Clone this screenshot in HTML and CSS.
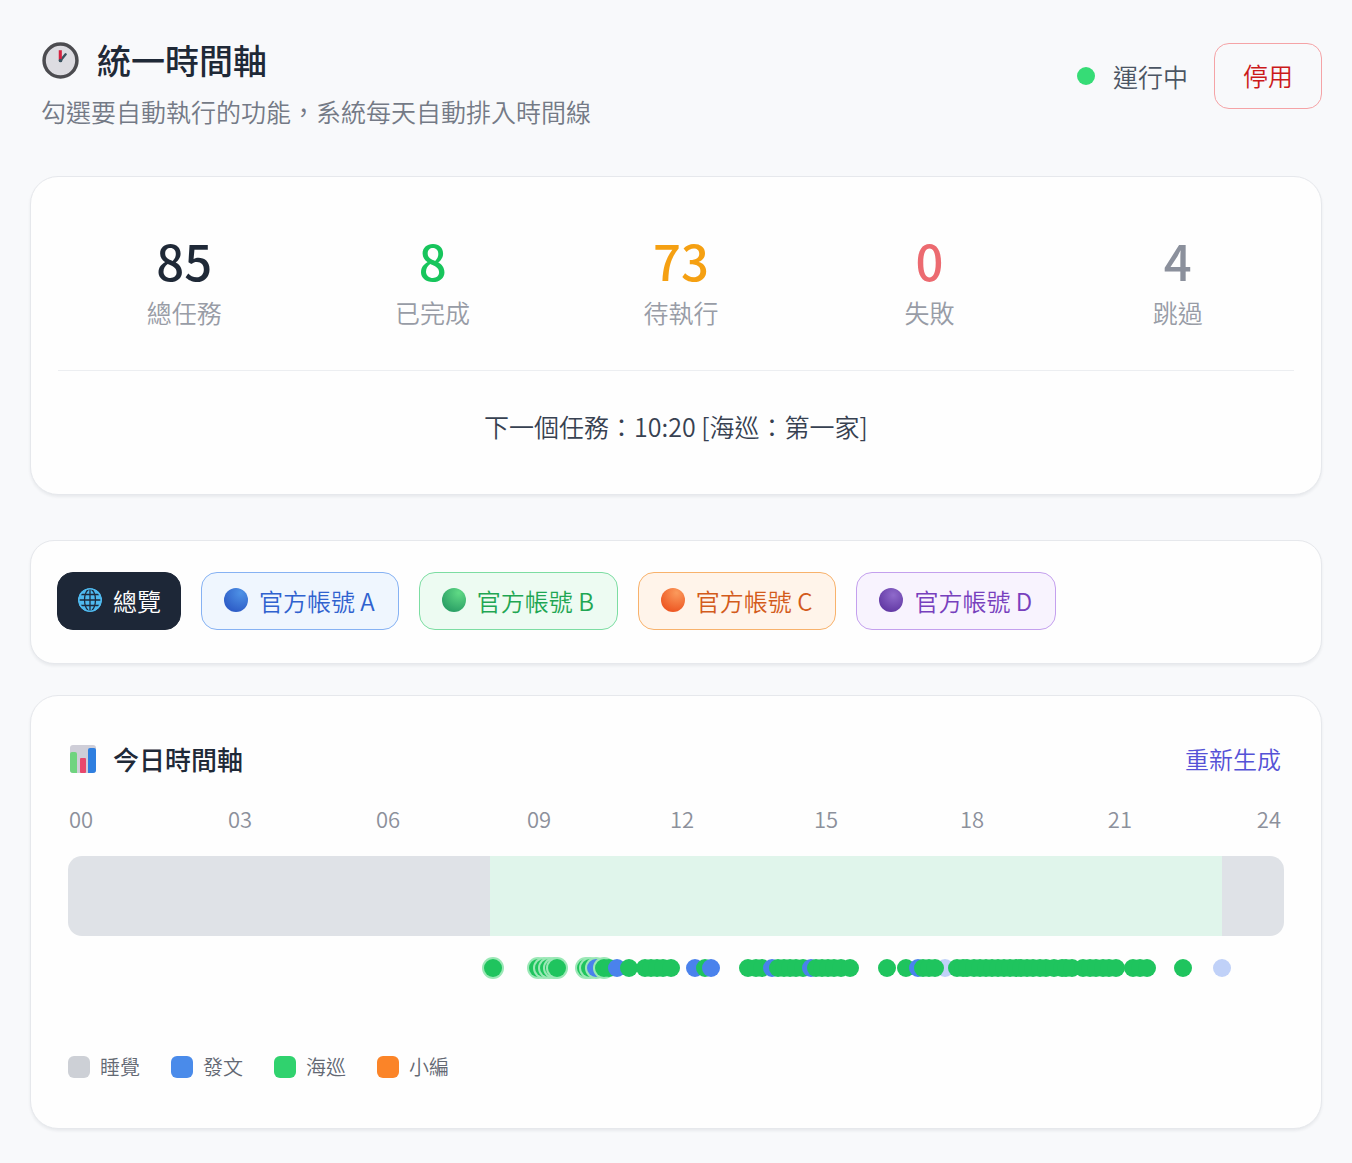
FILE: index.html
```html
<!DOCTYPE html>
<html lang="zh-Hant">
<head>
    <meta charset="UTF-8">
    <meta name="viewport" content="width=device-width, initial-scale=1.0">
    <title>統一時間軸</title>
    <link rel="stylesheet" href="styles.css">
</head>
<body>

    <header class="header">
        <div class="heading">
            <h1>
                <svg class="clock" viewBox="0 0 36 36" aria-hidden="true">
                    <circle cx="18" cy="18" r="16" fill="#dddce1" stroke="#4c4c50" stroke-width="3.4"/>
                    <path d="M18 18 L23 12" stroke="#3b5360" stroke-width="2.4" stroke-linecap="round"/>
                    <path d="M17.8 17.5 V8" stroke="#d5213f" stroke-width="3"/>
                    <circle cx="18" cy="18" r="1.8" fill="#3b5360"/>
                </svg>
                統一時間軸
            </h1>
            <p>勾選要自動執行的功能，系統每天自動排入時間線</p>
        </div>
        <div class="actions">
            <span class="status">運行中</span>
            <button type="button" class="stop">停用</button>
        </div>
    </header>

    <main>
        <section class="card summary">
            <dl class="stats">
                <div class="stat"><dt>總任務</dt><dd>85</dd></div>
                <div class="stat done"><dt>已完成</dt><dd>8</dd></div>
                <div class="stat pending"><dt>待執行</dt><dd>73</dd></div>
                <div class="stat failed"><dt>失敗</dt><dd>0</dd></div>
                <div class="stat skipped"><dt>跳過</dt><dd>4</dd></div>
            </dl>
            <p class="next">下一個任務：10:20 [海巡：第一家]</p>
        </section>

        <nav class="card accounts">
            <button type="button" class="pill active">
                <svg class="globe" viewBox="0 0 24 24" aria-hidden="true">
                    <circle cx="12" cy="12" r="12" fill="#4fb9ee"/>
                    <g fill="none" stroke="#1d2a3d" stroke-width="1.3">
                        <ellipse cx="12" cy="12" rx="5.5" ry="11"/>
                        <path d="M12 1 V23 M1 12 H23 M3 6.5 H21 M3 17.5 H21"/>
                    </g>
                    <circle cx="12" cy="12" r="11.2" fill="none" stroke="#4fb9ee" stroke-width="1.6"/>
                </svg>
                總覽
            </button>
            <button type="button" class="pill blue"><span class="ball"></span>官方帳號 A</button>
            <button type="button" class="pill green"><span class="ball"></span>官方帳號 B</button>
            <button type="button" class="pill orange"><span class="ball"></span>官方帳號 C</button>
            <button type="button" class="pill purple"><span class="ball"></span>官方帳號 D</button>
        </nav>

        <section class="card timeline">
            <div class="timeline-head">
                <h2>
                    <svg class="chart" viewBox="0 0 26 28" aria-hidden="true">
                        <rect width="26" height="28" rx="3" fill="#cfced8"/>
                        <path d="M0 9 Q0 7 2 7 H5 Q7 7 7 9 V28 H3 Q0 28 0 25 Z" fill="#6fd47f"/>
                        <rect x="10" y="13" width="6" height="15" rx="1" fill="#e8486c"/>
                        <path d="M18 5 Q18 3 20 3 H24 Q26 3 26 5 V25 Q26 28 23 28 H18 Z" fill="#2f7fe0"/>
                    </svg>
                    今日時間軸
                </h2>
                <a href="#" class="regenerate">重新生成</a>
            </div>
            <div class="hours">
                <span>00</span><span>03</span><span>06</span><span>09</span><span>12</span><span>15</span><span>18</span><span>21</span><span>24</span>
            </div>
            <div class="bar">
                <div class="awake"></div>
            </div>
            <div class="dots" id="dots"></div>
            <ul class="legend">
                <li class="sleep">睡覺</li>
                <li class="post">發文</li>
                <li class="patrol">海巡</li>
                <li class="editor">小編</li>
            </ul>
        </section>
    </main>

    <script src="timeline.js"></script>
</body>
</html>
```

FILE: styles.css
```css
* {
    box-sizing: border-box;
}

body {
    margin: 0;
    padding: 36px 30px 34px;
    background: #f8f9fb;
    color: #1f2937;
    font-family: "Noto Sans CJK TC", sans-serif;
    font-size: 25px;
    font-weight: 350;
}

h1, h2, p, dl, dd, ul {
    margin: 0;
    padding: 0;
}

button {
    font: inherit;
    cursor: pointer;
}

.header {
    display: flex;
    justify-content: space-between;
    align-items: flex-start;
    margin-bottom: 46px;
}

.heading {
    padding-left: 11px;
}

.heading h1 {
    display: flex;
    align-items: center;
    gap: 18px;
    margin-bottom: 8px;
    padding-left: 1px;
    font-size: 34px;
    font-weight: 500;
    line-height: 48px;
}

.clock {
    width: 37px;
    height: 37px;
}

.heading p {
    color: #747a86;
    line-height: 38px;
}

.actions {
    display: flex;
    align-items: center;
    gap: 26px;
    padding-top: 7px;
}

.status {
    display: flex;
    align-items: center;
    gap: 18px;
    color: #4b5563;
}

.status::before {
    content: "";
    width: 18px;
    height: 18px;
    border-radius: 50%;
    background: #36dc76;
}

.stop {
    height: 66px;
    padding: 0 28px 2px;
    border: 1px solid #f5a3a6;
    border-radius: 15px;
    background: transparent;
    color: #cb1a1a;
}

.card {
    border: 1px solid #e6e8ec;
    border-radius: 28px;
    background: #fefefe;
    box-shadow: 0 2px 3px rgba(30, 40, 60, 0.07);
}

/* Summary */
.summary {
    margin-bottom: 45px;
    padding: 56px 27px 50px;
}

.stats {
    display: grid;
    grid-template-columns: repeat(5, 1fr);
    gap: 16px;
    padding: 0 0 41px 10px;
    border-bottom: 1px solid #eceef1;
}

.stat {
    display: flex;
    flex-direction: column-reverse;
    gap: 8px;
    text-align: center;
}

.stat dt {
    color: #989ca6;
    line-height: 34px;
}

.stat dd {
    font-size: 49px;
    font-weight: 500;
    line-height: 54px;
}

.done dd {
    color: #17c55c;
}

.pending dd {
    color: #f5a012;
}

.failed dd {
    color: #ec6a70;
}

.skipped dd {
    color: #8b909c;
}

.next {
    padding-top: 37px;
    color: #374151;
    line-height: 36px;
    text-align: center;
}

/* Account tabs */
.accounts {
    display: flex;
    flex-wrap: wrap;
    gap: 20px;
    margin-bottom: 31px;
    padding: 31px 26px 33px;
    border-radius: 24px;
}

.pill {
    display: flex;
    align-items: center;
    gap: 11px;
    height: 58px;
    padding: 0 23px 2px 22px;
    border: 1px solid;
    border-radius: 16px;
    font-size: 24px;
}

.pill.active {
    padding: 0 19px 2px 20px;
    border-color: #1d2737;
    background: #1d2737;
    color: #fff;
}

.globe, .ball {
    width: 24px;
    height: 24px;
    border-radius: 50%;
}

.pill.blue {
    border-color: #86b2f3;
    background: #eff6fe;
    color: #2f62cf;
}

.pill.green {
    border-color: #7cdda2;
    background: #edfbf2;
    color: #1fa653;
}

.pill.orange {
    border-color: #f8b26c;
    background: #fff4ea;
    color: #d35b1b;
}

.pill.purple {
    border-color: #c4a0ee;
    background: #f8f3fe;
    color: #7740bd;
}

.blue .ball {
    background: radial-gradient(circle at 70% 20%, #4e92e6, #2f5fc8 75%);
}

.green .ball {
    background: radial-gradient(circle at 70% 20%, #60da85, #2da267 75%);
}

.orange .ball {
    background: radial-gradient(circle at 65% 20%, #fb9a5c, #ee5a25 75%);
}

.purple .ball {
    background: radial-gradient(circle at 60% 30%, #8f6acb, #633aa5 75%);
}

/* Timeline */
.timeline {
    padding: 44px 37px 46px;
}

.timeline-head {
    display: flex;
    justify-content: space-between;
    align-items: center;
    padding: 0 3px 0 2px;
    line-height: 38px;
}

.timeline-head h2 {
    display: flex;
    align-items: center;
    gap: 17px;
    font-size: 26px;
    font-weight: 500;
}

.chart {
    width: 26px;
    height: 28px;
}

.regenerate {
    color: #5552d6;
    font-size: 24px;
    text-decoration: none;
}

.hours {
    display: grid;
    grid-template-columns: 159fr 148fr 151fr 143fr 144fr 146fr 148fr 149fr auto;
    margin: 24px 0 22px;
    padding: 0 3px 0 1px;
    color: #8c909b;
    font-size: 22px;
    line-height: 32px;
}

.bar {
    height: 80px;
    border-radius: 14px;
    background: #dfe2e7;
}

.awake {
    width: 60.2%;
    height: 100%;
    margin-left: 34.7%;
    background: #e0f5eb;
}

.dots {
    position: relative;
    height: 18px;
    margin: 23px 0 75px;
}

.dot {
    position: absolute;
    width: 18px;
    height: 18px;
    border-radius: 50%;
    transform: translateX(-50%);
}

.dot.patrol {
    background: #1fc45e;
}

.dot.post {
    background: #4a82ec;
}

.dot.skipped {
    background: #c0d1f8;
}

.dot.finished {
    box-shadow: 0 0 0 2px #9be8b6;
}

.legend {
    display: flex;
    gap: 31px;
    color: #636873;
    font-size: 20px;
    line-height: 30px;
    list-style: none;
}

.legend li {
    display: flex;
    align-items: center;
    gap: 10px;
}

.legend li::before {
    content: "";
    width: 22px;
    height: 22px;
    border-radius: 6px;
}

.sleep::before {
    background: #cdd0d6;
}

.legend .post::before {
    background: #4a8bea;
}

.legend .patrol::before {
    background: #30d26e;
}

.editor::before {
    background: #fb8428;
}
```

FILE: timeline.js
```js
// position on the track (0 - 1216), type, finished
const TRACK = 1216;
const tasks = [
    [877, 'skipped'],
    [425, 'patrol', true],
    [470, 'patrol', true], [476, 'patrol', true], [481, 'patrol', true], [486, 'patrol', true], [489, 'patrol', true],
    [518, 'patrol', true], [522, 'patrol', true], [528, 'post', true], [536, 'patrol', true],
    [541, 'patrol'], [549, 'post'], [561, 'patrol'],
    [577, 'patrol'], [583, 'patrol'], [589, 'patrol'], [595, 'patrol'], [603, 'patrol'],
    [627, 'post'], [637, 'patrol'], [643, 'post'],
    [680, 'patrol'], [688, 'patrol'], [694, 'patrol'], [704, 'post'], [710, 'patrol'],
    [716, 'patrol'], [722, 'patrol'], [728, 'patrol'], [735, 'patrol'], [743, 'post'],
    [748, 'patrol'], [754, 'patrol'], [760, 'patrol'], [766, 'patrol'], [773, 'patrol'], [782, 'patrol'],
    [819, 'patrol'], [838, 'patrol'], [850, 'post'], [855, 'patrol'], [861, 'patrol'], [867, 'patrol'],
    [889, 'patrol'], [895, 'patrol'], [899, 'patrol'], [906, 'patrol'], [912, 'patrol'], [918, 'patrol'],
    [924, 'patrol'], [930, 'patrol'], [936, 'patrol'], [942, 'patrol'], [948, 'patrol'], [953, 'patrol'],
    [959, 'patrol'], [965, 'patrol'], [972, 'patrol'], [978, 'patrol'], [986, 'patrol'], [994, 'patrol'],
    [998, 'patrol'], [1004, 'patrol'], [1015, 'patrol'], [1022, 'patrol'], [1028, 'patrol'], [1035, 'patrol'],
    [1041, 'patrol'], [1048, 'patrol'], [1065, 'patrol'], [1072, 'patrol'], [1079, 'patrol'],
    [1115, 'patrol'], [1154, 'skipped']
];

const dots = document.getElementById('dots');
tasks.forEach(([at, type, finished]) => {
    const dot = document.createElement('span');
    dot.className = 'dot ' + type + (finished ? ' finished' : '');
    dot.style.left = (at / TRACK * 100) + '%';
    dots.appendChild(dot);
});
```
